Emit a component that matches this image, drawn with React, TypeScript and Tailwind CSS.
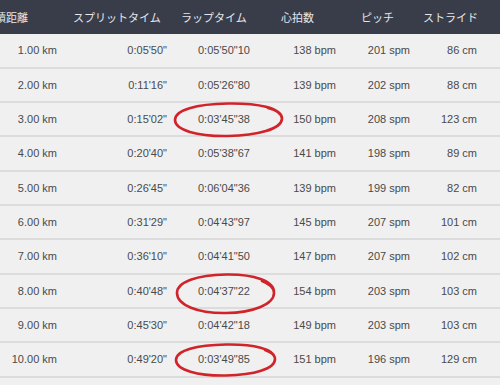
import React from "react";

const rows = [
  ["1.00 km", "0:05'50\"", "0:05'50\"10", "138 bpm", "201 spm", "86 cm"],
  ["2.00 km", "0:11'16\"", "0:05'26\"80", "139 bpm", "202 spm", "88 cm"],
  ["3.00 km", "0:15'02\"", "0:03'45\"38", "150 bpm", "208 spm", "123 cm"],
  ["4.00 km", "0:20'40\"", "0:05'38\"67", "141 bpm", "198 spm", "89 cm"],
  ["5.00 km", "0:26'45\"", "0:06'04\"36", "139 bpm", "199 spm", "82 cm"],
  ["6.00 km", "0:31'29\"", "0:04'43\"97", "145 bpm", "207 spm", "101 cm"],
  ["7.00 km", "0:36'10\"", "0:04'41\"50", "147 bpm", "207 spm", "102 cm"],
  ["8.00 km", "0:40'48\"", "0:04'37\"22", "154 bpm", "203 spm", "103 cm"],
  ["9.00 km", "0:45'30\"", "0:04'42\"18", "149 bpm", "203 spm", "103 cm"],
  ["10.00 km", "0:49'20\"", "0:03'49\"85", "151 bpm", "196 spm", "129 cm"],
];

const cellCls = [
  "w-[62px] justify-end pr-[5px]",
  "w-[110px] justify-end pr-[5px]",
  "w-[90px] justify-start pl-[26px]",
  "w-[83px] justify-end pr-[9px]",
  "w-[75px] justify-end pr-[10px]",
  "w-[80px] justify-end pr-[23px]",
];

export default function App() {
  return (
    <div className="relative w-[500px] h-[385px] overflow-hidden bg-[#f0f0f0] font-['Liberation_Sans',Arial,sans-serif]">
      <div className="flex h-[34.3px] bg-[#393d49] text-[#e6e7ea] text-[11px] font-['Noto_Sans_CJK_JP',sans-serif]">
        <div className="w-[62px] flex items-center justify-end pr-[34px] whitespace-nowrap overflow-hidden">累積距離</div>
        <div className="w-[110px] flex items-center pl-[11px] whitespace-nowrap">スプリットタイム</div>
        <div className="w-[90px] flex items-center pl-[9px] whitespace-nowrap">ラップタイム</div>
        <div className="w-[83px] flex items-center pl-[19px] whitespace-nowrap">心拍数</div>
        <div className="w-[75px] flex items-center pl-[16px] whitespace-nowrap">ピッチ</div>
        <div className="w-[80px] flex items-center pl-[3px] whitespace-nowrap">ストライド</div>
      </div>
      {rows.map((r, i) => (
        <div key={i} className="flex h-[34.35px] border-b-2 border-[#dcdcdc] text-[11px] text-[#4a4a4a]">
          {r.map((c, j) => (
            <div key={j} className={`flex items-center whitespace-nowrap ${cellCls[j]}`}>
              {c}
            </div>
          ))}
        </div>
      ))}
      <svg className="absolute left-0 top-0 pointer-events-none" width="500" height="385" viewBox="0 0 500 385">
        <g fill="none" stroke="#d1232a" strokeWidth="2.6" strokeLinecap="round">
          <path d="M282 118 C281 108 258 103 228 103.5 C196 104 175 110 175 120 C175 130 197 136.5 228 136 C258 135.5 281 129 282 119 C282 114 276 110 268 108" />
          <path d="M274 292 C274 281 254 274 226 274.5 C197 275 177 282 177 293 C177 305 198 313.5 226 313 C254 312.5 274 304 274 293 C274 288 270 284 262 281" />
          <path d="M275 358 C274 349 254 344 226 344.5 C197 345 176 350 176 360 C176 370 198 376 226 375.5 C254 375 275 369 275 359 C275 355 271 352 265 350" />
        </g>
      </svg>
    </div>
  );
}
